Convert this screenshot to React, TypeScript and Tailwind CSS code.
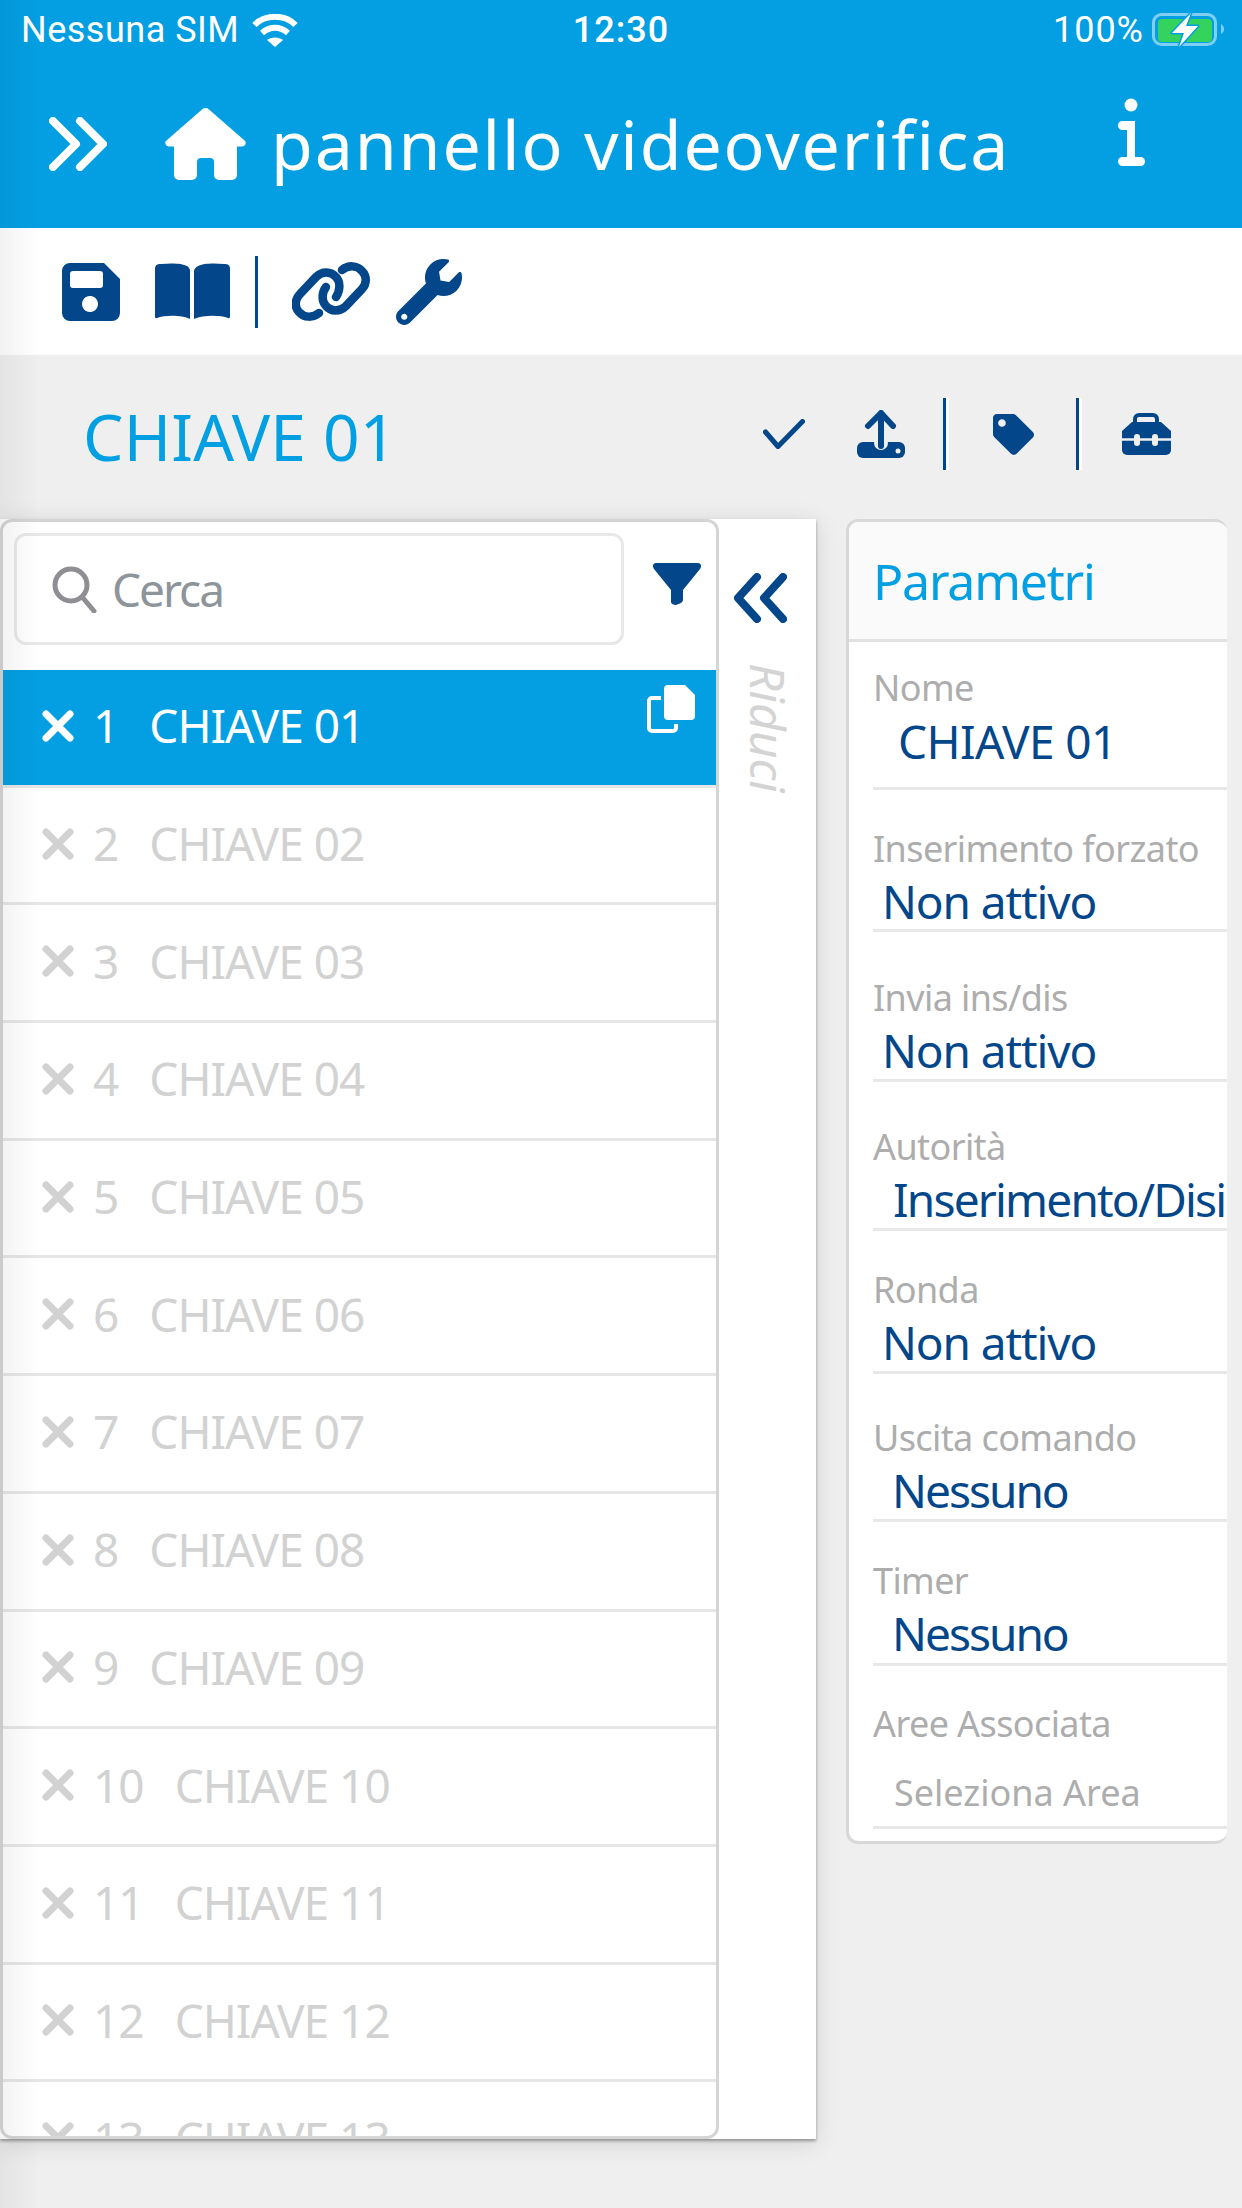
import { FaTag, FaWrench } from "react-icons/fa";

const NAVY = "#03478a";

const KEYS = Array.from({ length: 13 }, (_, i) => i + 1);

const FIELDS = [
  { label: "Nome", value: "CHIAVE 01", pad: "pl-[25px] tracking-[-0.6px]", box: "pt-[26px] h-[148px]", gap: "mt-[5px]" },
  { label: "Inserimento forzato", value: "Non attivo", pad: "pl-[9px] tracking-[-1.1px]", box: "pt-[39px] h-[142px]", gap: "mt-[4px]" },
  { label: "Invia ins/dis", value: "Non attivo", pad: "pl-[9px] tracking-[-1.1px]", box: "pt-[46px] h-[150px]", gap: "mt-[4px]" },
  { label: "Autorità", value: "Inserimento/Disinserimento", pad: "pl-[20px] tracking-[-1.8px]", box: "pt-[45px] h-[149px]", gap: "mt-[4px]" },
  { label: "Ronda", value: "Non attivo", pad: "pl-[9px] tracking-[-1.1px]", box: "pt-[39px] h-[143px]", gap: "mt-[4px]" },
  { label: "Uscita comando", value: "Nessuno", pad: "pl-[19px] tracking-[-2px]", box: "pt-[44px] h-[148px]", gap: "mt-[4px]" },
  { label: "Timer", value: "Nessuno", pad: "pl-[19px] tracking-[-2px]", box: "pt-[39px] h-[144px]", gap: "mt-[4px]" },
];

function WifiIcon() {
  return (
    <svg width="46" height="33" viewBox="0 0 46 33" fill="none" stroke="white" strokeWidth="6">
      <path d="M2.5 11C13 0 33 0 43.5 11" />
      <path d="M10 19C18 12 28 12 36 19" />
      <path d="M15 26C19 22.5 27 22.5 31 26L23 33z" fill="white" stroke="none" />
    </svg>
  );
}

function BatteryIcon() {
  return (
    <svg width="74" height="36" viewBox="0 0 74 36" fill="none">
      <rect x="1.5" y="2.5" width="62" height="30" rx="8" stroke="#7fcff2" strokeWidth="3" />
      <rect x="6" y="7" width="54" height="23" rx="4" fill="#33d35e" />
      <path d="M69 12c2 1 3 3 3 5s-1 4-3 5z" fill="#7fcff2" />
      <path d="M39 1L20 21H32L27 35L46 14H34Z" fill="white" stroke="#039fe2" strokeWidth="3" paintOrder="stroke" strokeLinejoin="round" />
    </svg>
  );
}

function XIcon({ color }: { color: string }) {
  return (
    <svg width="32" height="32" viewBox="0 0 32 32" fill="none" stroke={color} strokeWidth="7" strokeLinecap="round">
      <path d="M4 4l24 24M28 4L4 28" />
    </svg>
  );
}

function Separator() {
  return <div className="h-[72px] w-[3px] bg-[#03478a] shadow-[3px_0_0_#ffffff]" />;
}

export default function App() {
  return (
    <div className="relative flex h-[2208px] w-[1242px] flex-col overflow-hidden bg-[#efefef] font-['Noto_Sans',sans-serif]">
      {/* Status bar + nav */}
      <div className="h-[228px] shrink-0 bg-[#039fe2] text-white">
        <div className="grid h-[60px] grid-cols-3 items-center px-[21px] font-['Roboto',sans-serif] text-[36px]">
          <div className="flex items-center gap-[13px] tracking-[0.5px]">
            <span>Nessuna SIM</span>
            <WifiIcon />
          </div>
          <div className="text-center font-medium tracking-[1px]">12:30</div>
          <div className="mr-[-5px] flex items-center justify-end gap-[8px] tracking-[1px]">
            <span>100%</span>
            <BatteryIcon />
          </div>
        </div>
        <div className="flex h-[168px] items-center pl-[49px]">
          <svg width="58" height="54" viewBox="0 0 58 54" fill="none" stroke="white" strokeWidth="8" strokeLinecap="round" strokeLinejoin="round">
            <path d="M4 4l23 23L4 50M31 4l23 23-23 23" />
          </svg>
          <svg className="ml-[58px]" width="81" height="72" viewBox="0 0 81 72" fill="white">
            <path d="M37 1.5a5 5 0 0 1 7 0L79 32a3.5 3.5 0 0 1-2 6.5h-5V67a5 5 0 0 1-5 5H54a5 5 0 0 1-5-5V54a4 4 0 0 0-4-4h-9a4 4 0 0 0-4 4v13a5 5 0 0 1-5 5H14a5 5 0 0 1-5-5V38.5H4A3.5 3.5 0 0 1 2 32z" />
          </svg>
          <span className="ml-[25px] text-[68px] leading-none tracking-[1.85px]">pannello videoverifica</span>
          <svg className="mb-[24px] ml-auto mr-[97px]" width="27" height="68" viewBox="0 0 27 68" fill="white">
            <circle cx="13" cy="7" r="6.5" />
            <rect y="23" width="17" height="9" rx="4.5" />
            <rect x="9" y="23" width="8" height="42" />
            <rect y="59" width="27" height="9" rx="4.5" />
          </svg>
        </div>
      </div>

      {/* Toolbar */}
      <div className="flex h-[127px] shrink-0 items-center bg-white pl-[62px]">
        <svg width="58" height="58" viewBox="0 0 58 58" fill={NAVY}>
          <path fillRule="evenodd" d="M8 0H42L58 16V50a8 8 0 0 1-8 8H8a8 8 0 0 1-8-8V8a8 8 0 0 1 8-8zM11 8a3 3 0 0 0-3 3V22a3 3 0 0 0 3 3H38a3 3 0 0 0 3-3V11a3 3 0 0 0-3-3zM28 33a8 8 0 1 0 .01 0z" />
        </svg>
        <svg className="ml-[35px]" width="75" height="57" viewBox="0 0 75 57" fill={NAVY}>
          <path d="M0 6C0 2 2 1 6 1C15 0 27 0 32 3C34 4 35 6 35 8V56C27 52 10 52 2 55C1 55.5 0 55 0 54Z" />
          <path d="M75 6C75 2 73 1 69 1C60 0 48 0 43 3C41 4 39 6 39 8V56C48 52 65 52 73 55C74 55.5 75 55 75 54Z" />
        </svg>
        <div className="ml-[25px] h-[72px] w-[3px] bg-[#03478a]" />
        <svg className="ml-[34px]" width="78" height="62" viewBox="0 0 78 62" fill="none" stroke={NAVY} strokeWidth="8.5" strokeLinecap="round">
          <path d="M27 52C21 57 12 57 7 51C2 46 3 38 8 33L24 16C30 10 39 10 44 16C49 21 48 30 44 36" />
          <path d="M50 9C56 4 65 4 70 10C75 15 75 23 70 28L54 45C48 51 39 51 34 45C29 40 30 31 34 26" />
        </svg>
        <FaWrench className="ml-[26px]" size={66} color={NAVY} />
      </div>

      {/* Title row */}
      <div className="flex h-[164px] shrink-0 items-center pb-[6px] pl-[83px]">
        <span className="mt-[5px] text-[64px] leading-none tracking-[0.2px] text-[#02a0e3]">CHIAVE 01</span>
        <svg className="ml-auto" width="42" height="30" viewBox="0 0 42 30" fill="none" stroke={NAVY} strokeWidth="5" strokeLinecap="round" strokeLinejoin="round">
          <path d="M2.5 13L15 27.5 39.5 2.5" />
        </svg>
        <svg className="ml-[52px]" width="48" height="48" viewBox="0 0 48 48" fill="none">
          <rect y="32" width="48" height="16" rx="6" fill={NAVY} />
          <circle cx="24" cy="33" r="7" fill="#efefef" />
          <circle cx="41" cy="41" r="2.5" fill="#efefef" />
          <path d="M24 36V3M11 16L24 3l12 13" stroke={NAVY} strokeWidth="6" strokeLinecap="round" strokeLinejoin="round" />
        </svg>
        <div className="ml-[38px]"><Separator /></div>
        <FaTag className="ml-[47px]" size={41} color={NAVY} />
        <div className="ml-[42px]"><Separator /></div>
        <svg className="ml-[43px] mr-[71px]" width="49" height="42" viewBox="0 0 49 42" fill="none">
          <rect x="13" y="2" width="22" height="14" rx="4" stroke={NAVY} strokeWidth="4" />
          <path d="M10 9H39L49 18V37a5 5 0 0 1-5 5H5a5 5 0 0 1-5-5V18z" fill={NAVY} />
          <path d="M0 26.5H49" stroke="#efefef" strokeWidth="2.5" />
          <rect x="12" y="21" width="6" height="12" rx="3" fill="#efefef" />
          <rect x="30" y="21" width="6" height="12" rx="3" fill="#efefef" />
        </svg>
      </div>

      {/* Main */}
      <div className="flex items-start">
        <div className="flex h-[1620px] w-[816px] shrink-0 bg-white shadow-[0_2px_3px_rgba(0,0,0,0.35),0_4px_24px_rgba(0,0,0,0.12)]">
          {/* Key list */}
          <div className="h-full w-[719px] shrink-0 overflow-hidden rounded-[12px] border-[3px] border-[#d5d5d5]">
            <div className="flex h-[148px] items-start pl-[11px] pt-[11px]">
              <div className="flex h-[112px] w-[610px] items-center rounded-[12px] border-[3px] border-[#e8e8e8] pl-[35px]">
                <svg width="46" height="48" viewBox="0 0 46 48" fill="none" stroke="#8e8e93" strokeWidth="5" strokeLinecap="round">
                  <circle cx="19" cy="20" r="16" />
                  <path d="M31 33l11 13" />
                </svg>
                <span className="ml-[14px] text-[46px] leading-none tracking-[-2px] text-[#8d959a]">Cerca</span>
              </div>
              <svg className="ml-[29px] mt-[30px]" width="48" height="42" viewBox="0 0 48 42" fill={NAVY}>
                <path d="M3 0H45C48 0 49 3 47 6L30 27V37C30 38 29 39 28 40L23 42C21 42 18 41 18 39V27L1 6C-1 3 0 0 3 0Z" />
              </svg>
            </div>
            {KEYS.map((n) => {
              const active = n === 1;
              const num = String(n).padStart(2, "0");
              return (
                <div
                  key={n}
                  className={`relative flex h-[117.7px] items-center border-b-[3px] border-[#e6e6e6] pb-[3px] pl-[39px] text-[46px] tracking-[-1px] ${
                    active ? "bg-[#039fe2] text-white" : "text-[#d2d2d2]"
                  }`}
                >
                  <XIcon color={active ? "#ffffff" : "#d2d2d2"} />
                  <span className="ml-[19px]">{n}</span>
                  <span className="ml-[31px]">CHIAVE {num}</span>
                  {active && (
                    <svg className="absolute right-[20px] top-[15px]" width="49" height="48" viewBox="0 0 49 48" fill="none">
                      <path d="M14 13H5a3 3 0 0 0-3 3V43a3 3 0 0 0 3 3H26a3 3 0 0 0 3-3V39" stroke="white" strokeWidth="4" />
                      <path d="M21 0H38L48 10V31a4 4 0 0 1-4 4H21a4 4 0 0 1-4-4V4a4 4 0 0 1 4-4z" fill="white" />
                    </svg>
                  )}
                </div>
              );
            })}
          </div>
          {/* Collapse strip */}
          <div className="flex grow flex-col items-start pl-[15px] pt-[54px]">
            <svg width="53" height="50" viewBox="0 0 53 50" fill="none" stroke={NAVY} strokeWidth="8" strokeLinecap="round" strokeLinejoin="round">
              <path d="M23 4L4 25l19 21M49 4L30 25l19 21" />
            </svg>
            <span className="ml-[10px] mt-[40px] text-[48px] italic leading-none text-[#d4d4d4] [writing-mode:vertical-rl]">Riduci</span>
          </div>
        </div>

        {/* Parameters */}
        <div className="ml-[30px] w-[381px] overflow-hidden rounded-[12px] border-y-[3px] border-l-[3px] border-[#d8d8d8] bg-white">
          <div className="flex h-[120px] items-center border-b-[3px] border-[#e2e2e2] bg-[#fafafa] pl-[24px]">
            <span className="text-[50px] leading-none tracking-[-1.2px] text-[#02a0e3]">Parametri</span>
          </div>
          <div className="pl-[24px]">
            {FIELDS.map((f) => (
              <div key={f.label} className={`overflow-hidden whitespace-nowrap border-b-[3px] border-[#e8e8e8] ${f.box}`}>
                <div className="text-[36px] leading-[40px] tracking-[-0.6px] text-[#adadad]">{f.label}</div>
                <div className={`${f.pad} ${f.gap} text-[46px] leading-[56px] text-[#03478a]`}>{f.value}</div>
              </div>
            ))}
            <div className="h-[163px] overflow-hidden whitespace-nowrap border-b-[3px] border-[#e8e8e8] pt-[38px]">
              <div className="text-[36px] leading-[40px] tracking-[-0.6px] text-[#adadad]">Aree Associata</div>
              <div className="mt-[27px] pl-[21px] text-[36px] leading-[44px] text-[#adadad]">Seleziona Area</div>
            </div>
          </div>
          <div className="h-[12px]" />
        </div>
      </div>

      {/* Soft edge shade down the left side */}
      <div className="pointer-events-none absolute inset-y-0 left-0 w-[40px] bg-gradient-to-r from-black/5 to-transparent" />
    </div>
  );
}
